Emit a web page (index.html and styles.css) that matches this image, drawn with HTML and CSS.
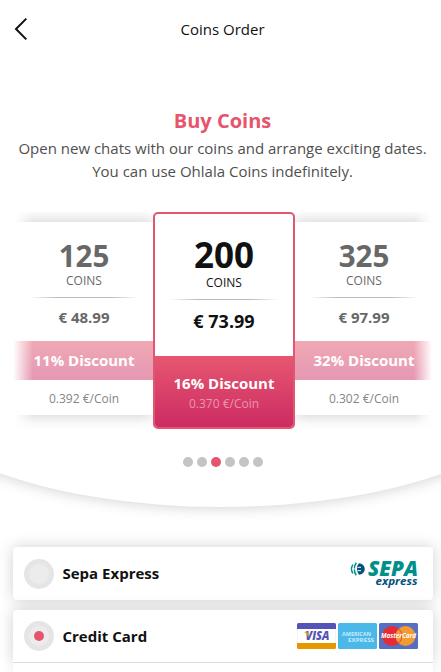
FILE: index.html
```
<!DOCTYPE html>
<html lang="en">
<head>
<meta charset="utf-8">
<title>Coins Order</title>
<link rel="stylesheet" href="styles.css">
</head>
<body>
<main class="page">
  <section class="hero">
    <header class="topbar">
      <svg class="back" viewBox="0 0 14 24" width="14" height="24"><path d="M12.3 1.6 2 12l10.3 10.4" fill="none" stroke="#111" stroke-width="2"/></svg>
      <h1 class="title">Coins Order</h1>
    </header>
    <div class="intro">
      <h2 class="heading">Buy Coins</h2>
      <p class="lead">Open new chats with our coins and arrange exciting dates.<br>You can use Ohlala Coins indefinitely.</p>
    </div>
    <div class="slider">
      <article class="pack">
        <div class="amount">125</div>
        <div class="unit">COINS</div>
        <div class="rule"></div>
        <div class="price">€ 48.99</div>
        <div class="discount">11% Discount</div>
        <div class="rate">0.392 €/Coin</div>
      </article>
      <article class="pack active">
        <div class="amount">200</div>
        <div class="unit">COINS</div>
        <div class="rule"></div>
        <div class="price">€ 73.99</div>
        <div class="deal">
          <div class="discount">16% Discount</div>
          <div class="rate">0.370 €/Coin</div>
        </div>
      </article>
      <article class="pack">
        <div class="amount">325</div>
        <div class="unit">COINS</div>
        <div class="rule"></div>
        <div class="price">€ 97.99</div>
        <div class="discount">32% Discount</div>
        <div class="rate">0.302 €/Coin</div>
      </article>
    </div>
    <div class="dots"><i></i><i></i><i class="on"></i><i></i><i></i><i></i></div>
  </section>
  <section class="methods">
    <div class="method">
      <span class="radio"></span>
      <span class="name">Sepa Express</span>
      <svg class="sepa" width="69" height="28" viewBox="0 0 69 28">
        <path d="M10 3.200a5.800 5.800 0 1 1 0 11.600q-2-1.700-2-5.800t2-5.800z" fill="#03507c"/>
        <path d="M7.300 2.800Q5.300 5.300 5.300 9t2 6.200M4 4.600Q2.500 6.500 2.500 9T4 13.400" fill="none" stroke="#00908a" stroke-width="1.500"/>
        <path d="M3 9h4M8.500 7.300h3.500M8.500 10.700h3.500" stroke="#fff" stroke-width="1"/>
        <text x="19" y="16.300" class="sepa-main" textLength="50" lengthAdjust="spacingAndGlyphs">SEPA</text>
        <text x="26.500" y="25" class="sepa-sub" textLength="42" lengthAdjust="spacingAndGlyphs">express</text>
      </svg>
    </div>
    <div class="method card">
      <span class="radio checked"></span>
      <span class="name">Credit Card</span>
      <svg class="brands" width="121" height="26" viewBox="0 0 121 26">
        <rect width="39" height="26" rx="1.500" fill="#fff"/>
        <path d="M0 6V1.500Q0 0 1.500 0h36Q39 0 39 1.500V6z" fill="#5552b8"/>
        <path d="M0 20h39v4.500q0 1.500-1.500 1.500h-36Q0 26 0 24.500z" fill="#e79800"/>
        <path d="M.3 6v14M38.700 6v14" stroke="#e6e6ee" stroke-width=".6"/>
        <text x="8.500" y="17.400" class="visa" textLength="24" lengthAdjust="spacingAndGlyphs">VISA</text>
        <path d="M7.500 8.700h2.800l1.500 4.200-.6 1.800Q10.300 10.500 7.500 9.300z" fill="#e79800"/>
        <rect x="41" width="39" height="26" rx="1.500" fill="#4ab8e9"/>
        <text x="45" y="12.700" class="amex" textLength="29" lengthAdjust="spacingAndGlyphs">AMERICAN</text>
        <text x="51" y="19.200" class="amex" textLength="26" lengthAdjust="spacingAndGlyphs">EXPRESS</text>
        <rect x="82" width="39" height="26" rx="1.500" fill="#556fc2"/>
        <circle cx="95" cy="13" r="10" fill="#e52c35"/>
        <circle cx="108.500" cy="13" r="10" fill="#f49a35"/>
        <path d="M101.800 5.800a10 10 0 0 1 0 14.400" fill="none" stroke="#e52c35" stroke-width=".8"/>
        <text x="84" y="15.300" class="mc" textLength="35" lengthAdjust="spacingAndGlyphs">MasterCard</text>
      </svg>
    </div>
    <div class="form"></div>
  </section>
</main>
</body>
</html>
```
FILE: styles.css
```
* { box-sizing: border-box; }
html, body { margin: 0; background: #fff; }
body { font-family: "Open Sans", "Noto Sans", sans-serif; color: #111; }
h1, h2, p { margin: 0; }
.page { width: 441px; height: 672px; overflow: hidden; }

/* Wide panel whose lower edge curves beneath the slider */
.hero {
  width: 661px;
  height: 507px;
  margin-left: -109px;
  padding: 0 111px 0 109px;
  background: #fff;
  border-radius: 0 0 50% 50% / 0 0 131px 131px;
  box-shadow: 0 0 15px rgba(0, 0, 0, .2);
}
.topbar { display: flex; align-items: center; height: 60px; padding: 0 14px; }
.back { margin-top: -3px; }
.title { flex: 1; margin: -2px 10px 0 0; font-size: 15px; font-weight: 400; line-height: 20px; text-align: center; }
.intro { padding: 47px 0 0 4px; text-align: center; white-space: nowrap; }
.heading { color: #e6546e; font-size: 20px; font-weight: 700; line-height: 27px; }
.lead { margin-top: 3px; color: #4f4f4f; font-size: 15px; line-height: 23px; }

.slider {
  position: relative;
  display: flex;
  align-items: center;
  justify-content: center;
  width: 421px;
  height: 217px;
  margin: 29px 0 0 13px;
  overflow: hidden;
}
.slider::before, .slider::after {
  content: "";
  position: absolute;
  z-index: 1;
  top: 0;
  width: 20px;
  height: 100%;
}
.slider::before { left: 0; background: linear-gradient(90deg, #fff, rgba(255, 255, 255, 0)); }
.slider::after { right: 0; background: linear-gradient(270deg, #fff 10%, rgba(255, 255, 255, 0)); }
.pack {
  flex: none;
  width: 140px;
  height: 193px;
  margin-top: -4px;
  padding-top: 19px;
  background: #fff;
  box-shadow: 0 0 15px rgba(0, 0, 0, .21);
  color: #686868;
  text-align: center;
}
.pack > div:not(.rule):not(.deal):not(.discount) { padding-left: 1px; }
.amount { font-size: 29.500px; font-weight: 700; line-height: 30px; }
.unit { font-size: 12px; line-height: 19px; }
.rule { height: 1px; margin: 7px 15px 0; background: linear-gradient(90deg, transparent, #bbb 25%, #bbb 75%, transparent); }
.price { font-size: 15px; font-weight: 700; line-height: 39px; }
.pack .discount {
  height: 39px;
  margin-top: 4px;
  padding-left: 1px;
  background: linear-gradient(#f0a8b4, #e598b4);
  color: #fff;
  font-size: 15px;
  font-weight: 700;
  line-height: 38px;
}
.rate { padding: 9px 0 0 1px; color: #858585; font-size: 12px; line-height: 20px; }
.pack.active {
  position: relative;
  z-index: 2;
  width: 142px;
  height: 217px;
  margin: 0 -1px;
  padding-top: 23px;
  border: 2px solid #e2566e;
  border-radius: 5px;
  color: #111;
  overflow: hidden;
  box-shadow: none;
}
.active .amount { font-size: 35px; line-height: 36px; }
.active .unit { padding-top: 1px; line-height: 18px; }
.active .price { font-size: 18px; line-height: 42px; }
.active .rule { margin-top: 7px; }
.deal { height: 72px; margin-top: 14px; padding-top: 16px; background: linear-gradient(#e65770, #cc2b63); }
.pack.active .discount { height: 22px; margin: 0; background: none; line-height: 22px; }
.pack.active .rate { padding: 1px 0 0 1px; color: #eb95b0; line-height: 18px; }

.dots { display: flex; justify-content: center; gap: 4px; padding: 28px 0 0 5px; }
.dots i { width: 10px; height: 10px; border-radius: 50%; background: #c4c4c4; }
.dots .on { background: #e6546e; }

.methods { display: flex; flex-direction: column; padding: 40px 8px 0 13px; }
.method {
  display: flex;
  align-items: center;
  height: 53px;
  margin-bottom: 10px;
  padding: 0 15px 0 11px;
  background: #fff;
  border-radius: 4px;
  box-shadow: 0 0 15px rgba(0, 0, 0, .19);
}
.method.card { margin: 0; border-bottom: 1px solid #ddd; border-radius: 4px 4px 0 0; }
.form { position: relative; height: 60px; background: #fff; box-shadow: 0 15px 15px rgba(0, 0, 0, .19); }
.radio {
  display: flex;
  align-items: center;
  justify-content: center;
  width: 30px;
  height: 30px;
  border-radius: 50%;
  background: radial-gradient(circle, #ececec 9px, #e5e5e5 11px);
}
.checked::after { content: ""; width: 10px; height: 10px; border-radius: 50%; background: #e6546e; }
.name { flex: 1; margin: -1px 0 0 8.500px; font-size: 15px; font-weight: 700; line-height: 20px; }
.sepa { overflow: visible; }
.sepa-main { fill: #00908a; font: italic 800 20.500px "Open Sans", sans-serif; }
.sepa-sub { fill: #03507c; font: italic 700 11px "Open Sans", sans-serif; }
.visa { fill: #5552b8; font: italic 800 12px "Open Sans", sans-serif; }
.amex { fill: #c9ecfb; font: 700 6px "Open Sans", sans-serif; }
.mc { fill: #fff; font: italic 700 6.500px "Open Sans", sans-serif; }
```
